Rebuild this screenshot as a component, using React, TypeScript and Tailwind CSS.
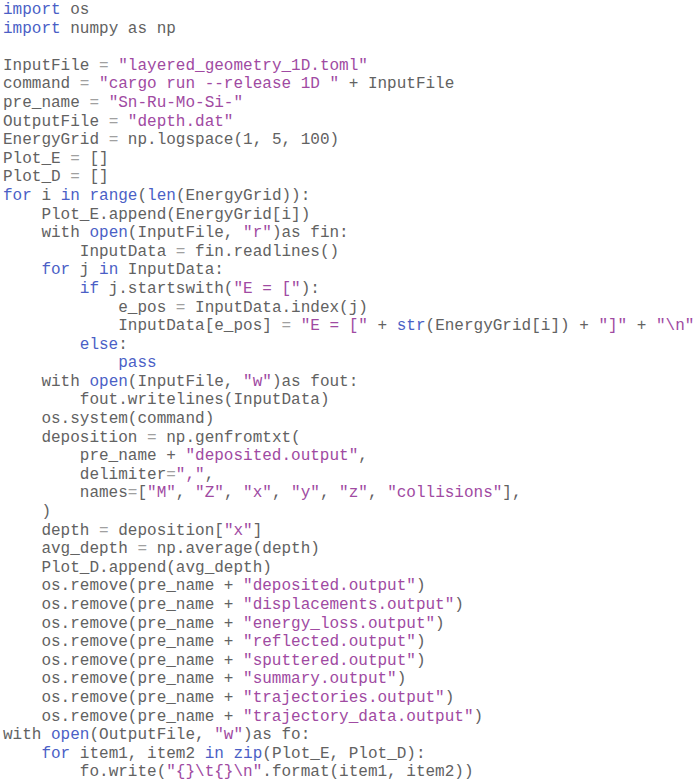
import React from "react";

const code = `import os
import numpy as np

InputFile = "layered_geometry_1D.toml"
command = "cargo run --release 1D " + InputFile
pre_name = "Sn-Ru-Mo-Si-"
OutputFile = "depth.dat"
EnergyGrid = np.logspace(1, 5, 100)
Plot_E = []
Plot_D = []
for i in range(len(EnergyGrid)):
    Plot_E.append(EnergyGrid[i])
    with open(InputFile, "r")as fin:
        InputData = fin.readlines()
    for j in InputData:
        if j.startswith("E = ["):
            e_pos = InputData.index(j)
            InputData[e_pos] = "E = [" + str(EnergyGrid[i]) + "]" + "\\n"
        else:
            pass
    with open(InputFile, "w")as fout:
        fout.writelines(InputData)
    os.system(command)
    deposition = np.genfromtxt(
        pre_name + "deposited.output",
        delimiter=",",
        names=["M", "Z", "x", "y", "z", "collisions"],
    )
    depth = deposition["x"]
    avg_depth = np.average(depth)
    Plot_D.append(avg_depth)
    os.remove(pre_name + "deposited.output")
    os.remove(pre_name + "displacements.output")
    os.remove(pre_name + "energy_loss.output")
    os.remove(pre_name + "reflected.output")
    os.remove(pre_name + "sputtered.output")
    os.remove(pre_name + "summary.output")
    os.remove(pre_name + "trajectories.output")
    os.remove(pre_name + "trajectory_data.output")
with open(OutputFile, "w")as fo:
    for item1, item2 in zip(Plot_E, Plot_D):
        fo.write("{}\\t{}\\n".format(item1, item2))`;

const keywords = new Set(["import", "for", "in", "if", "else", "pass", "open", "range", "len", "str", "zip"]);

function Line({ text }: { text: string }) {
  const parts = text.split(/("[^"]*"|[A-Za-z_][A-Za-z0-9_]*|=)/g).filter((p) => p !== "");
  return (
    <div className="whitespace-pre h-[18.6px]">
      {parts.map((p, i) => {
        if (p.startsWith('"')) {
          return (
            <span key={i} className="text-[#a04aa2]">
              {p}
            </span>
          );
        }
        if (keywords.has(p)) {
          return (
            <span key={i} className="text-[#4b5fc6]">
              {p}
            </span>
          );
        }
        if (p === "=") {
          return (
            <span key={i} className="text-[#a0a0a0]">
              {p}
            </span>
          );
        }
        return <span key={i}>{p}</span>;
      })}
    </div>
  );
}

export default function App() {
  return (
    <div className="w-[700px] h-[784px] bg-white overflow-hidden pl-[3px] pt-[1px] font-['Liberation_Mono',monospace] text-[16px] leading-[18.6px] text-[#626262]">
      {code.split("\n").map((line, i) => (
        <Line key={i} text={line} />
      ))}
    </div>
  );
}
